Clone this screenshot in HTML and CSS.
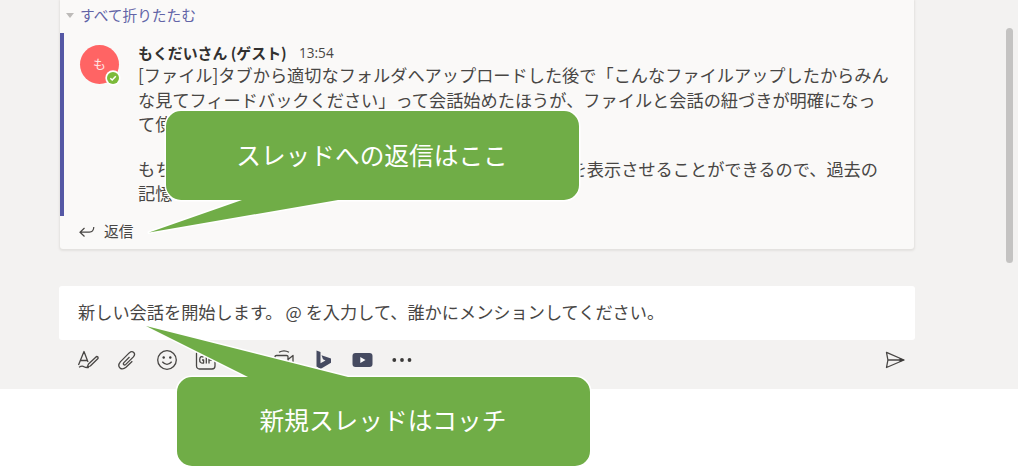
FILE: index.html
```html
<!DOCTYPE html>
<html lang="ja">
<head>
<meta charset="utf-8">
<title>会話</title>
<link rel="stylesheet" href="styles.css">
</head>
<body>
<main class="channel">
  <section class="thread">
    <div class="collapse"><span class="caret"></span><span>すべて折りたたむ</span></div>
    <article class="message">
      <div class="avatar">も
        <svg class="presence" viewBox="0 0 16 16"><circle cx="8" cy="8" r="7.7" fill="#fff"/><circle cx="8" cy="8" r="6" fill="#7cba3b"/><path d="M5.3 8.2l1.9 1.8 3.6-3.8" fill="none" stroke="#fff" stroke-width="1.5"/></svg>
      </div>
      <div class="content">
        <div class="meta"><b class="author">もくだいさん (ゲスト)</b><time>13:54</time></div>
        <p>[ファイル]タブから適切なフォルダへアップロードした後で「こんなファイルアップしたからみん<br>な見てフィードバックください」って会話始めたほうが、ファイルと会話の紐づきが明確になっ<br>て使</p>
        <p class="second"><span class="split"><span>もち</span><span>を表示させることができるので、過去の</span></span>記憶</p>
      </div>
    </article>
    <div class="reply">
      <svg width="16" height="13" viewBox="0 0 16 13" fill="none" stroke="#484644" stroke-width="1.2"><path d="M5.5 3L1 7.2l4.5 4.3M1 7.2h9.3Q14.6 7 14.8 2"/></svg>
      <span>返信</span>
    </div>
  </section>
  <section class="compose">新しい会話を開始します。<span class="at">@</span> を入力して、誰かにメンションしてください。</section>
  <div class="toolbar">
    <svg class="icon" viewBox="0 0 22 22"><path d="M1.5 16L7 2.5 11 13M3.6 11.5h6.5M19.5 7.5l-8 7.5-1.2 3 3-1 7.7-7.5q.5-2-1.5-2zM2 18.2q3-1.7 5-.5t5 .6"/></svg>
    <svg class="icon" viewBox="0 0 22 22"><path d="M16.3 12.2L10 18.3q-3.4 2.9-6 .6t.3-6l8.9-9q2.6-2.2 4.5-.4t-.3 4.4l-7.6 7.5q-1.3 1-2.1.2t.2-2l5.6-5.6"/></svg>
    <svg class="icon" viewBox="0 0 22 22"><circle cx="11" cy="11" r="9.3"/><path d="M6.3 12.8q4.7 5.2 9.4 0"/><g class="fill"><circle cx="7.7" cy="8.5" r="1.2"/><circle cx="14.3" cy="8.5" r="1.2"/></g></svg>
    <svg class="icon" viewBox="0 0 22 22"><rect x="1.5" y="1.5" width="18.5" height="18.5" rx="3"/><path d="M8.5 8.2Q5 6.5 4.7 10.5T8.6 14v-3H7M11.3 7.5v7M14 14.5v-7h3.7M14 11h3"/></svg>
    <span class="icon"></span>
    <svg class="icon" viewBox="0 0 22 22"><path d="M6 3.3q5-3 10 0M2 7.5q0-1 1.5-1h10q1.5 0 1.5 1V17H2zM15 10.5l5-4v10l-5-3"/></svg>
    <svg class="icon" viewBox="0 0 22 22"><path class="dark" d="M3.5 1.5l4 1.4v11.3l5-2.8-2.5-1.2-1.5-4 9.5 3.3v4.3L7.5 20l-4-2.4z"/></svg>
    <svg class="icon" viewBox="0 0 22 22"><rect class="dark" x=".5" y="4" width="20" height="14" rx="3"/><path class="light" d="M8.3 8l5.2 3-5.2 3z"/></svg>
    <svg class="icon" viewBox="0 0 22 22"><g class="fill"><circle cx="3.3" cy="11" r="1.9"/><circle cx="11" cy="11" r="1.9"/><circle cx="18.5" cy="11" r="1.9"/></g></svg>
    <svg class="icon send" viewBox="0 0 22 22"><path d="M2.5 3.4L20 11 2.5 18.5l1.4-7.5zM3.9 11H20"/><path class="fill" d="M15.5 9l5 2-5 2z"/></svg>
  </div>
  <span class="scrollbar"></span>
</main>
<aside class="callout reply-note">
  <svg width="460" height="150" viewBox="0 0 460 150"><path d="M60 11H443a15 15 0 0 1 15 15V85a15 15 0 0 1-15 15H217L28 132.5 121 100H60a15 15 0 0 1-15-15V26a15 15 0 0 1 15-15z"/></svg>
  <span>スレッドへの返信はここ</span>
</aside>
<aside class="callout new-note">
  <svg width="460" height="150" viewBox="0 0 460 150"><path d="M72 57H128L26 6 228 57H455a15 15 0 0 1 15 15V131a15 15 0 0 1-15 15H72a15 15 0 0 1-15-15V72a15 15 0 0 1 15-15z"/></svg>
  <span>新規スレッドはコッチ</span>
</aside>
</body>
</html>
```
FILE: styles.css
```css
* { box-sizing: border-box; }
body {
  margin: 0;
  height: 468px;
  overflow: hidden;
  position: relative;
  background: #fff;
  color: #484644;
  font-family: "Noto Sans CJK JP", sans-serif;
  font-size: 17.2px;
}
.channel {
  position: relative;
  height: 389px;
  padding: 0 104px 0 60px;
  background: #f3f2f1;
}
.thread {
  height: 249px;
  background: #faf9f8;
  border-radius: 0 0 3px 3px;
  box-shadow: 0 1px 2px 1px #e3e1df;
}
.collapse {
  display: flex;
  align-items: center;
  gap: 6px;
  height: 33px;
  padding: 0 0 3px 6px;
  color: #6264a7;
  font-size: 14.7px;
  line-height: 30px;
}
.caret {
  border: 4.5px solid transparent;
  border-top: 5px solid #bdbbb9;
  border-bottom: 0;
}
.message {
  display: flex;
  gap: 19px;
  height: 183px;
  padding: 8px 0 0 16px;
  border-left: 4px solid #5558a5;
}
.avatar {
  position: relative;
  flex: none;
  width: 39px;
  height: 39px;
  margin-top: 4px;
  border-radius: 50%;
  background: #ff6464;
  color: #ffe4e4;
  font-size: 13px;
  line-height: 37px;
  text-align: center;
}
.presence {
  position: absolute;
  right: -2px;
  bottom: -2px;
  width: 16px;
  height: 16px;
}
.content { width: 756px; white-space: nowrap; }
.meta {
  display: flex;
  gap: 13px;
  height: 22px;
  font-size: 14.9px;
  line-height: 23px;
}
.author { width: 148px; color: #323130; }
time { font-family: "Open Sans", sans-serif; font-size: 13.6px; }
p { margin: 0; line-height: 24.5px; }
.second { margin-top: 20px; }
.split {
  display: flex;
  justify-content: space-between;
  width: 740px;
}
.reply {
  display: flex;
  align-items: center;
  gap: 9px;
  height: 31px;
  padding-left: 19px;
  font-size: 14.7px;
}
.reply span { margin-top: -2px; }
.compose {
  height: 54px;
  margin: 37px -1px 0;
  padding-left: 19px;
  border-radius: 3px;
  background: #fff;
  line-height: 52px;
  white-space: nowrap;
}
.at { margin: 0 0 0 3px; }
.toolbar {
  display: flex;
  align-items: center;
  gap: 17.3px;
  height: 40px;
  padding: 0 8px 0 17px;
}
.icon {
  flex: none;
  width: 22px;
  height: 22px;
  fill: none;
  stroke: #484644;
  stroke-width: 1.3;
  stroke-linejoin: round;
}
.fill { fill: #3b3a39; stroke: none; }
.dark { fill: #464b61; stroke: none; }
.light { fill: #fff; stroke: none; }
.send { margin-left: auto; }
.scrollbar {
  position: absolute;
  top: 28px;
  right: 5px;
  width: 7px;
  height: 235px;
  border-radius: 4px;
  background: #c4c3c2;
}
.callout { position: absolute; color: #fff; font-size: 24.7px; }
.callout svg { display: block; overflow: visible; }
.callout path {
  fill: #70ad47;
  stroke: #fff;
  stroke-width: 3;
  stroke-linejoin: round;
  paint-order: stroke;
}
.callout span {
  position: absolute;
  width: 412px;
  line-height: 86px;
  text-align: center;
  white-space: nowrap;
}
.reply-note { left: 121px; top: 100px; }
.reply-note span { left: 45px; top: 11px; }
.new-note { left: 120px; top: 320px; }
.new-note span { left: 57px; top: 56px; }
```
